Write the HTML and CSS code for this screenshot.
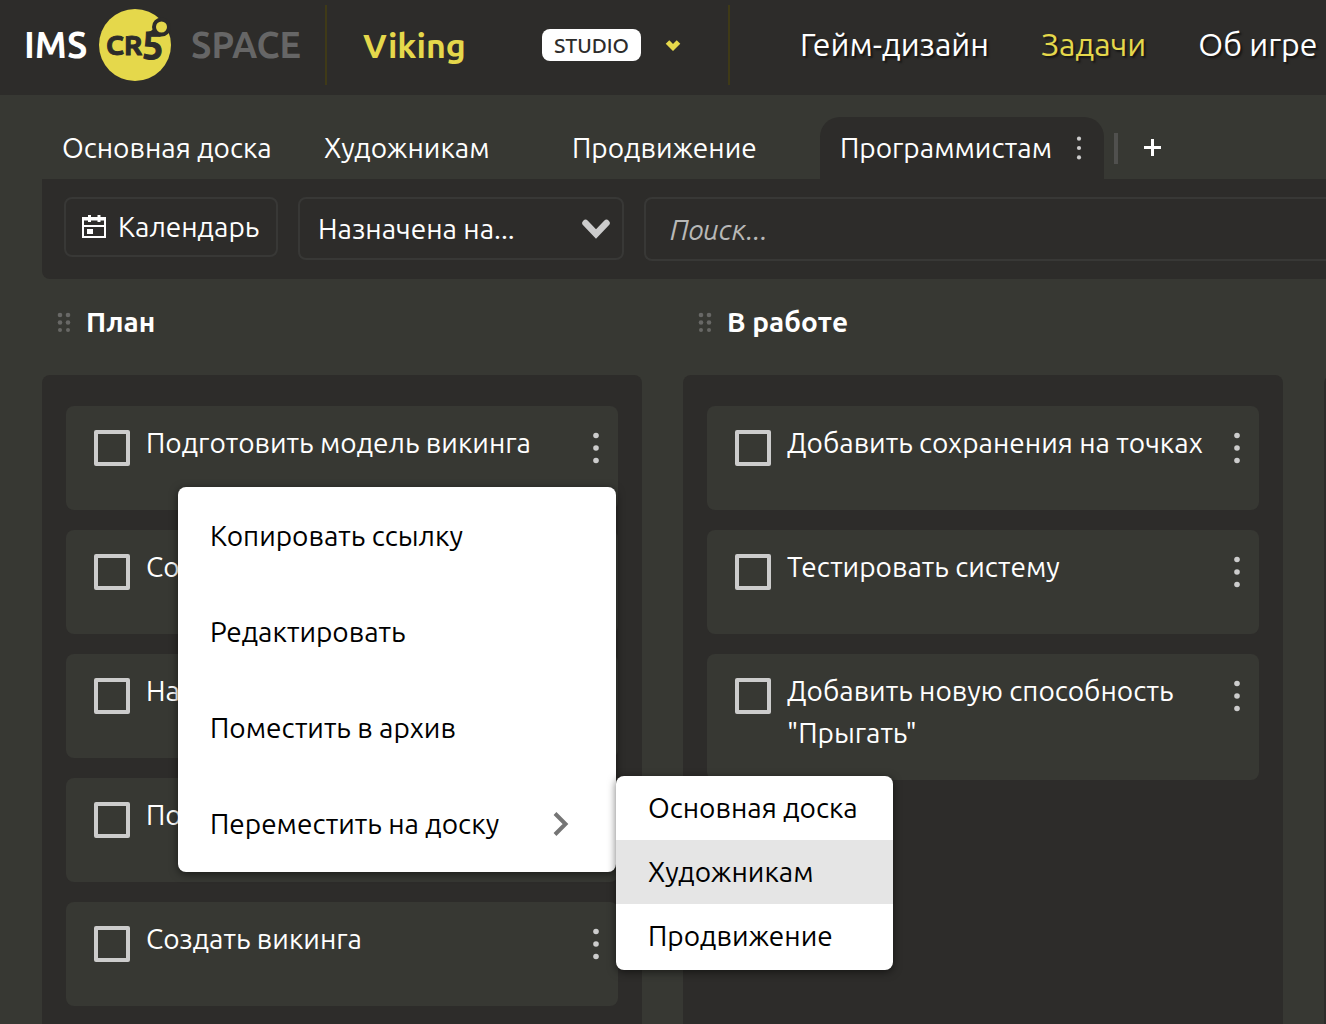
FILE: index.html
```html
<!DOCTYPE html>
<html lang="ru">
<head>
<meta charset="utf-8">
<meta name="viewport" content="width=device-width, initial-scale=1">
<title>Viking — Задачи</title>
<link rel="stylesheet" href="styles.css">
</head>
<body>
<svg class="sprite" aria-hidden="true">
  <symbol id="dots" viewBox="0 0 8 32"><circle cx="4" cy="3.500" r="2.800"/><circle cx="4" cy="16" r="2.800"/><circle cx="4" cy="28.500" r="2.800"/></symbol>
  <symbol id="grip" viewBox="0 0 14 20"><circle cx="3" cy="3" r="2.300"/><circle cx="11" cy="3" r="2.300"/><circle cx="3" cy="10.500" r="2.300"/><circle cx="11" cy="10.500" r="2.300"/><circle cx="3" cy="18" r="2"/><circle cx="11" cy="18" r="2"/></symbol>
</svg>

<header class="header">
  <a class="brand" href="#">
    <span class="brand-ims">IMS</span>
    <svg class="brand-logo" viewBox="0 0 72 72" role="img" aria-label="CR5">
      <circle cx="36" cy="36" r="36" fill="#e5d84b"/>
      <text x="7" y="46" class="logo-cr">CR</text>
      <text x="43" y="50" class="logo-five">5</text>
      <path d="M48 25.500q5-1 8-4" fill="none" stroke="#2d2c2a" stroke-width="4"/>
      <circle cx="62.500" cy="18" r="7.500" fill="#e5d84b" stroke="#2d2c2a" stroke-width="4"/>
    </svg>
    <span class="brand-space">SPACE</span>
  </a>
  <div class="project">
    <a class="project-name" href="#">Viking</a>
    <span class="badge">STUDIO</span>
    <button class="icon-button" aria-label="Выбрать проект">
      <svg width="16" height="12" viewBox="0 0 16 12"><path d="M2.500 3 8 8.500 13.500 3" fill="none" stroke="#e5d84b" stroke-width="5"/></svg>
    </button>
  </div>
  <nav class="nav">
    <a href="#">Гейм-дизайн</a>
    <a class="active" href="#">Задачи</a>
    <a href="#">Об игре</a>
  </nav>
</header>

<main class="workspace">
  <nav class="tabs">
    <a class="tab" href="#">Основная доска</a>
    <a class="tab" href="#">Художникам</a>
    <a class="tab" href="#">Продвижение</a>
    <div class="tab tab-active">
      <a href="#">Программистам</a>
      <button class="icon-button" aria-label="Меню доски"><svg class="tab-dots"><use href="#dots"/></svg></button>
    </div>
    <button class="add-tab" aria-label="Добавить доску"><svg width="18" height="18" viewBox="0 0 18 18"><path d="M8.500 0v17M0 8.500h17" stroke="#fff" stroke-width="3"/></svg></button>
  </nav>

  <div class="toolbar">
    <button class="field calendar">
      <svg width="24" height="24" viewBox="0 0 24 24" fill="none" stroke="#fff" stroke-width="2"><path d="M1 3h22v19H1zM1 11h22"/><path d="M1 4h22M7.500 0v7M17 0v7" stroke-width="3"/><path d="M5 14h6v5H5z" fill="#fff" stroke="none"/></svg>
      Календарь
    </button>
    <div class="assignee">
      <select class="field" aria-label="Назначена на">
        <option>Назначена на...</option>
      </select>
      <svg width="28" height="20" viewBox="0 0 28 20"><path d="M3.500 4 14 15 24.500 4" fill="none" stroke="#ccc" stroke-width="6.500" stroke-linecap="round"/></svg>
    </div>
    <input class="field search" type="search" placeholder="Поиск..." aria-label="Поиск">
  </div>

  <div class="board">
    <section class="column">
      <h2><svg class="grip"><use href="#grip"/></svg>План</h2>
      <div class="cards">
        <article class="card card-open">
          <input type="checkbox" id="t1"><label for="t1">Подготовить модель викинга</label>
          <button class="icon-button" aria-label="Меню задачи"><svg class="dots"><use href="#dots"/></svg></button>
          <div class="menu">
            <button class="menu-item">Копировать ссылку</button>
            <button class="menu-item">Редактировать</button>
            <button class="menu-item">Поместить в архив</button>
            <button class="menu-item">Переместить на доску
              <svg width="16" height="24" viewBox="0 0 16 24"><path d="m2 1.500 10.500 10.500L2 22.500" fill="none" stroke="#757575" stroke-width="4"/></svg>
            </button>
            <div class="submenu">
              <button>Основная доска</button>
              <button class="hover">Художникам</button>
              <button>Продвижение</button>
            </div>
          </div>
        </article>
        <article class="card">
          <input type="checkbox" id="t2"><label for="t2">Со</label>
        </article>
        <article class="card">
          <input type="checkbox" id="t3"><label for="t3">На</label>
        </article>
        <article class="card">
          <input type="checkbox" id="t4"><label for="t4">По</label>
        </article>
        <article class="card">
          <input type="checkbox" id="t5"><label for="t5">Создать викинга</label>
          <button class="icon-button" aria-label="Меню задачи"><svg class="dots"><use href="#dots"/></svg></button>
        </article>
      </div>
    </section>

    <section class="column">
      <h2><svg class="grip"><use href="#grip"/></svg>В работе</h2>
      <div class="cards">
        <article class="card">
          <input type="checkbox" id="t6"><label for="t6">Добавить сохранения на точках</label>
          <button class="icon-button" aria-label="Меню задачи"><svg class="dots"><use href="#dots"/></svg></button>
        </article>
        <article class="card">
          <input type="checkbox" id="t7"><label for="t7">Тестировать систему</label>
          <button class="icon-button" aria-label="Меню задачи"><svg class="dots"><use href="#dots"/></svg></button>
        </article>
        <article class="card">
          <input type="checkbox" id="t8"><label for="t8">Добавить новую способность "Прыгать"</label>
          <button class="icon-button" aria-label="Меню задачи"><svg class="dots"><use href="#dots"/></svg></button>
        </article>
      </div>
    </section>

    <section class="column">
      <h2></h2>
      <div class="cards"></div>
    </section>
  </div>
</main>
</body>
</html>
```
FILE: styles.css
```css
:root {
  --dark: #2d2c2a;
  --panel: #373833;
  --line: #383836;
  --accent: #e5d84b;
  --soft: #ccc;
}

* { box-sizing: border-box; }

body {
  margin: 0;
  height: 100vh;
  overflow: hidden;
  display: flex;
  flex-direction: column;
  background: var(--panel);
  color: #fff;
  font: 28px/42px Ubuntu, "Noto Sans", sans-serif;
}

a { color: inherit; text-decoration: none; white-space: nowrap; }

button, input, select { font: inherit; color: inherit; }

button { border: 0; background: none; padding: 0; text-align: left; white-space: nowrap; }

svg { display: block; flex: none; }

.sprite { position: absolute; width: 0; height: 0; }

.icon-button { display: flex; align-items: center; justify-content: center; }

/* Header */
.header {
  display: flex;
  align-items: center;
  flex: none;
  height: 95px;
  padding-bottom: 5px;
  background: var(--dark);
}

.brand, .project {
  display: flex;
  align-items: center;
  flex: none;
  height: 80px;
  border-right: 2px solid #3f3a17;
}

.brand {
  width: 327px;
  padding-left: 24px;
  font-size: 36px;
  font-weight: 700;
}

.brand-ims { width: 75px; }

.brand-logo { width: 72px; height: 72px; }

.brand-space { margin-left: 20px; color: #666; }

.logo-cr, .logo-five { fill: var(--dark); stroke: var(--dark); font-weight: 700; }
.logo-cr { font-size: 28px; }
.logo-five { font-size: 38px; }

.project { width: 403px; padding-left: 36px; }

.project-name { width: 179px; color: var(--accent); font-size: 34px; font-weight: 700; }

.badge {
  width: 99px;
  margin-right: 24px;
  border-radius: 8px;
  background: #fff;
  color: var(--dark);
  font-size: 21px;
  font-weight: 500;
  line-height: 32px;
  text-align: center;
}

.nav {
  display: flex;
  gap: 52px;
  padding: 0 0 2px 70px;
  font-size: 32px;
  text-shadow: 2px 2px 2px #0008;
}

.nav .active { color: var(--accent); }

/* Boards */
.workspace {
  display: flex;
  flex-direction: column;
  flex: 1;
  min-height: 0;
  padding: 22px 0 0 42px;
}

.tabs {
  display: grid;
  grid-template-columns: 262px 248px 268px 284px auto;
  justify-content: start;
  flex: none;
  height: 62px;
}

.tab { display: flex; align-items: center; padding-left: 20px; }

.tab-active {
  justify-content: space-between;
  padding-right: 21px;
  border-radius: 20px 20px 0 0;
  background: var(--dark);
}

.tab-dots { width: 8px; height: 24px; fill: var(--soft); }

.add-tab {
  align-self: center;
  height: 31px;
  margin-left: 10px;
  padding-left: 26px;
  border-left: 4px solid #50504e;
}

.toolbar {
  display: flex;
  gap: 20px;
  flex: none;
  height: 100px;
  padding: 18px 0 18px 22px;
  border-bottom-left-radius: 8px;
  background: var(--dark);
}

.field {
  border: 2px solid var(--line);
  border-radius: 8px;
  background: none;
  outline: 0;
}

.calendar {
  display: flex;
  align-items: center;
  gap: 12px;
  width: 214px;
  height: 60px;
  padding-left: 16px;
}

.assignee { display: grid; width: 326px; height: 63px; align-items: center; }

.assignee select {
  grid-area: 1 / 1;
  height: 100%;
  padding-left: 18px;
  appearance: none;
}

.assignee svg { grid-area: 1 / 1; justify-self: end; margin-right: 14px; pointer-events: none; }

.search {
  flex: 1;
  min-width: 0;
  height: 64px;
  padding-left: 24px;
  border-right: 0;
  border-radius: 8px 0 0 8px;
  appearance: none;
}

.search::placeholder { color: #b8b8b7; font-style: italic; opacity: 1; }

.board { display: flex; gap: 41px; flex: 1; min-height: 0; overflow: auto hidden; scrollbar-width: none; }

.column { display: flex; flex-direction: column; flex: none; width: 600px; }

.column h2 {
  display: flex;
  align-items: center;
  gap: 15px;
  height: 96px;
  margin: 0;
  padding: 0 0 10px 15px;
  font-size: 28px;
  font-weight: 700;
}

.grip { width: 14px; height: 20px; fill: #686866; }

.cards {
  display: flex;
  flex-direction: column;
  gap: 20px;
  flex: 1;
  padding: 31px 24px 0;
  border-radius: 8px 8px 0 0;
  background: var(--dark);
}

.card {
  display: flex;
  align-items: flex-start;
  flex: none;
  min-height: 104px;
  padding: 16px 18px 26px 28px;
  border-radius: 8px;
  background: var(--panel);
}

.card-open { position: relative; }

.card input {
  appearance: none;
  flex: none;
  width: 36px;
  height: 36px;
  margin: 8px 16px 0 0;
  border: 4px solid var(--soft);
  border-radius: 2px;
}

.card label { flex: 1; }

.card .icon-button { margin-top: 10px; }

.dots { width: 8px; height: 32px; fill: var(--soft); }

/* Task menu */
.menu {
  position: absolute;
  z-index: 1;
  top: 81px;
  left: 112px;
  width: 438px;
  padding-bottom: 1px;
  border-radius: 8px;
  background: #fff;
  color: #000;
  box-shadow: 0 2px 8px #0008;
}

.menu-item {
  display: flex;
  align-items: center;
  justify-content: space-between;
  width: 100%;
  height: 96px;
  padding: 2px 47px 0 32px;
}

.submenu {
  position: absolute;
  top: 289px;
  left: 100%;
  width: 277px;
  padding-bottom: 2px;
  overflow: hidden;
  border-radius: 8px;
  background: #fff;
  box-shadow: 0 2px 8px #0008;
}

.submenu button { display: block; width: 100%; height: 64px; padding-left: 32px; }

.submenu .hover { background: #e5e5e5; }
```
